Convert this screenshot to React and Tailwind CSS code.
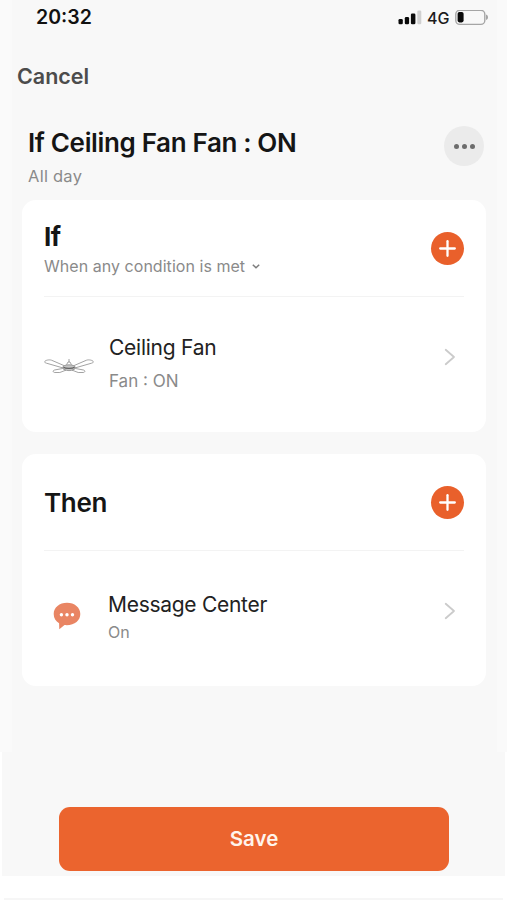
import { Plus } from 'lucide-react';

function StatusBar() {
    return (
        <div className="flex h-9 items-center justify-between pl-6 pr-2">
            <span className="text-[19.5px] font-semibold leading-none text-[#111]">20:32</span>
            <div className="flex items-center">
                <svg className="h-4 w-6" viewBox="0 0 24 16">
                    <rect x="0.5" y="9" width="4.3" height="5.3" rx="1.3" fill="#0a0a0a" />
                    <rect x="6.8" y="7" width="4.3" height="7.3" rx="1.3" fill="#0a0a0a" />
                    <rect x="12.9" y="3.5" width="4.5" height="10.8" rx="1.3" fill="#0a0a0a" />
                    <rect x="19.3" y="0.5" width="4" height="13.8" rx="1.3" fill="#d0d0d0" />
                </svg>
                <span className="ml-[5px] w-[28px] text-[16px] font-medium leading-none text-[#1c1c1c]">4G</span>
                <svg className="h-4 w-[34px]" viewBox="0 0 34 16">
                    <rect x="0.8" y="0.2" width="29" height="14.2" rx="4" fill="none" stroke="#a5a5a5" strokeWidth="1.4" />
                    <rect x="2.6" y="2" width="6" height="10.4" rx="1.8" fill="#0a0a0a" />
                    <path d="M31 4.600c1.400.5 2 1.400 2 2.700s-.6 2.200-2 2.700z" fill="#a5a5a5" />
                </svg>
            </div>
        </div>
    );
}

function AddButton() {
    return (
        <button className="mt-px flex h-[33px] w-[33px] shrink-0 items-center justify-center rounded-full bg-[#e9602b] text-white">
            <Plus className="h-[25px] w-[25px]" strokeWidth={2.2} />
        </button>
    );
}

function RowArrow() {
    return (
        <svg className="mr-2 h-[18px] w-3 shrink-0" viewBox="0 0 12 18" fill="none" stroke="#cbcbcb" strokeWidth="1.8" strokeLinecap="round" strokeLinejoin="round">
            <path d="M1.700 1.800 10 9l-8.300 7.200" />
        </svg>
    );
}

function FanIcon() {
    return (
        <svg className="h-4 w-[50px]" viewBox="0 0 50 16" fill="none" stroke="#8c8c8c" strokeWidth="0.8" strokeLinejoin="round">
            <path d="M20.500 7.800 7.500 2.200C5.500 1.400.8 2.200.700 3.800c0 .8.700 1.100 1.800 1.400L18.500 9.800z" />
            <path d="M29.500 7.800 42.500 2.200c2-.8 6.700 0 6.800 1.600 0 .8-.7 1.100-1.800 1.400L31.500 9.800z" />
            <path d="M18.500 10.500 10.500 12c-1.800.5-1.800 2.400.3 2.500h5l6-2.300z" />
            <path d="m31.500 10.500 8 1.500c1.800.5 1.800 2.400-.3 2.500h-5l-6-2.300z" />
            <path d="M25 1v3M22.500 6.800 24 4h2l1.500 2.800" />
            <path d="M18.800 9.300c0-3.300 12.400-3.300 12.400 0 0 4.400-12.400 4.400-12.400 0z" fill="#c4c4c4" />
            <path d="M19.500 9.200c2 1.600 9 1.600 11 0" stroke="#606060" strokeWidth="1.1" />
        </svg>
    );
}

function MessageIcon() {
    return (
        <svg className="h-[28px] w-[28px]" viewBox="0 0 28 28">
            <path d="M14 .8C6.500.8.700 5.400.700 12c0 4.100 2.100 7.300 5.400 9.200l.2 6 5.200-4.100c9.500.9 15.800-4.200 15.800-11.100C27.300 5.400 21.500.8 14 .8z" fill="#e98563" />
            <circle cx="8.400" cy="12.700" r="1.700" fill="#fff" />
            <circle cx="14" cy="12.700" r="1.700" fill="#fff" />
            <circle cx="19.500" cy="12.700" r="1.700" fill="#fff" />
        </svg>
    );
}

export default function App() {
    return (
        <div className="flex h-[900px] w-[507px] flex-col overflow-hidden whitespace-nowrap bg-white font-['Inter',sans-serif]">
            <div className="h-[752px] shrink-0 border-l-[12px] border-r-[10px] border-[#fafafa] bg-[#f8f8f8]">
                <StatusBar />

                <div className="mt-[29px] h-[22px] pl-[5px] text-[21.5px] font-semibold leading-[22px] text-[#4c4c4c]">Cancel</div>

                <div className="mt-[39px] flex h-[74px] justify-between pl-4 pr-[13px]">
                    <div>
                        <h1 className="mt-1 text-[26px] font-semibold leading-[26px] tracking-[-0.35px] text-[#151515]">If Ceiling Fan Fan : ON</h1>
                        <p className="mt-[11px] text-[16.5px] leading-[18px] tracking-[0.25px] text-[#8a8a8a]">All day</p>
                    </div>
                    <button className="flex h-10 w-10 items-center justify-center gap-[3px] rounded-full bg-[#ebebeb]">
                        <span className="h-[5px] w-[5px] rounded-full bg-[#6c6c6c]"></span>
                        <span className="h-[5px] w-[5px] rounded-full bg-[#6c6c6c]"></span>
                        <span className="h-[5px] w-[5px] rounded-full bg-[#6c6c6c]"></span>
                    </button>
                </div>

                {/* Conditions */}
                <section className="ml-[10px] h-[232px] w-[464px] rounded-[14px] bg-white px-[22px]">
                    <div className="flex h-[97px] items-center justify-between border-b border-[#f3f3f3]">
                        <div className="pt-[3px]">
                            <h2 className="text-[26px] font-bold leading-[26px] tracking-[-0.5px] text-[#151515]">If</h2>
                            <p className="mt-[7px] flex items-center text-[16px] leading-[18px] tracking-[0.04px] text-[#8a8a8a]">
                                When any condition is met
                                <svg className="ml-[7px] h-[5px] w-2" viewBox="0 0 8 5" fill="none" stroke="#7d7d7d" strokeWidth="1.5">
                                    <path d="m.8.700 3.200 3.100L7.200.7" />
                                </svg>
                            </p>
                        </div>
                        <AddButton />
                    </div>
                    <div className="flex pt-[39px]">
                        <div className="mt-[22px] w-[65px] shrink-0">
                            <FanIcon />
                        </div>
                        <div className="flex-1">
                            <h3 className="text-[21px] leading-[24px] tracking-[-0.25px] text-[#222]">Ceiling Fan</h3>
                            <p className="mt-3 text-[17px] leading-[18px] text-[#8a8a8a]">Fan : ON</p>
                        </div>
                        <div className="mt-3">
                            <RowArrow />
                        </div>
                    </div>
                </section>

                {/* Actions */}
                <section className="ml-[10px] mt-[22px] h-[232px] w-[464px] rounded-[14px] bg-white px-[22px]">
                    <div className="flex h-[97px] items-center justify-between border-b border-[#f3f3f3]">
                        <h2 className="mt-[2px] text-[26px] font-semibold leading-[26px] tracking-[-0.3px] text-[#151515]">Then</h2>
                        <AddButton />
                    </div>
                    <div className="flex pt-[42px]">
                        <div className="ml-[9px] mt-[9px] w-[55px] shrink-0">
                            <MessageIcon />
                        </div>
                        <div className="flex-1">
                            <h3 className="text-[21px] leading-[24px] tracking-[-0.28px] text-[#222]">Message Center</h3>
                            <p className="mt-[6px] text-[16px] leading-[18px] text-[#8a8a8a]">On</p>
                        </div>
                        <div className="mt-[9px]">
                            <RowArrow />
                        </div>
                    </div>
                </section>
            </div>

            <div className="mx-[2px] h-[124px] shrink-0 bg-[#f8f8f8] pl-[57px] pt-[55px]">
                <button className="block h-[64px] w-[390px] rounded-[11px] bg-[#eb642e] pt-px text-[20.500px] font-semibold text-[#fff4ec]">
                    Save
                </button>
            </div>
            <div className="mx-1 mt-[22px] h-[2px] bg-[#f6f6f6]"></div>
        </div>
    );
}
